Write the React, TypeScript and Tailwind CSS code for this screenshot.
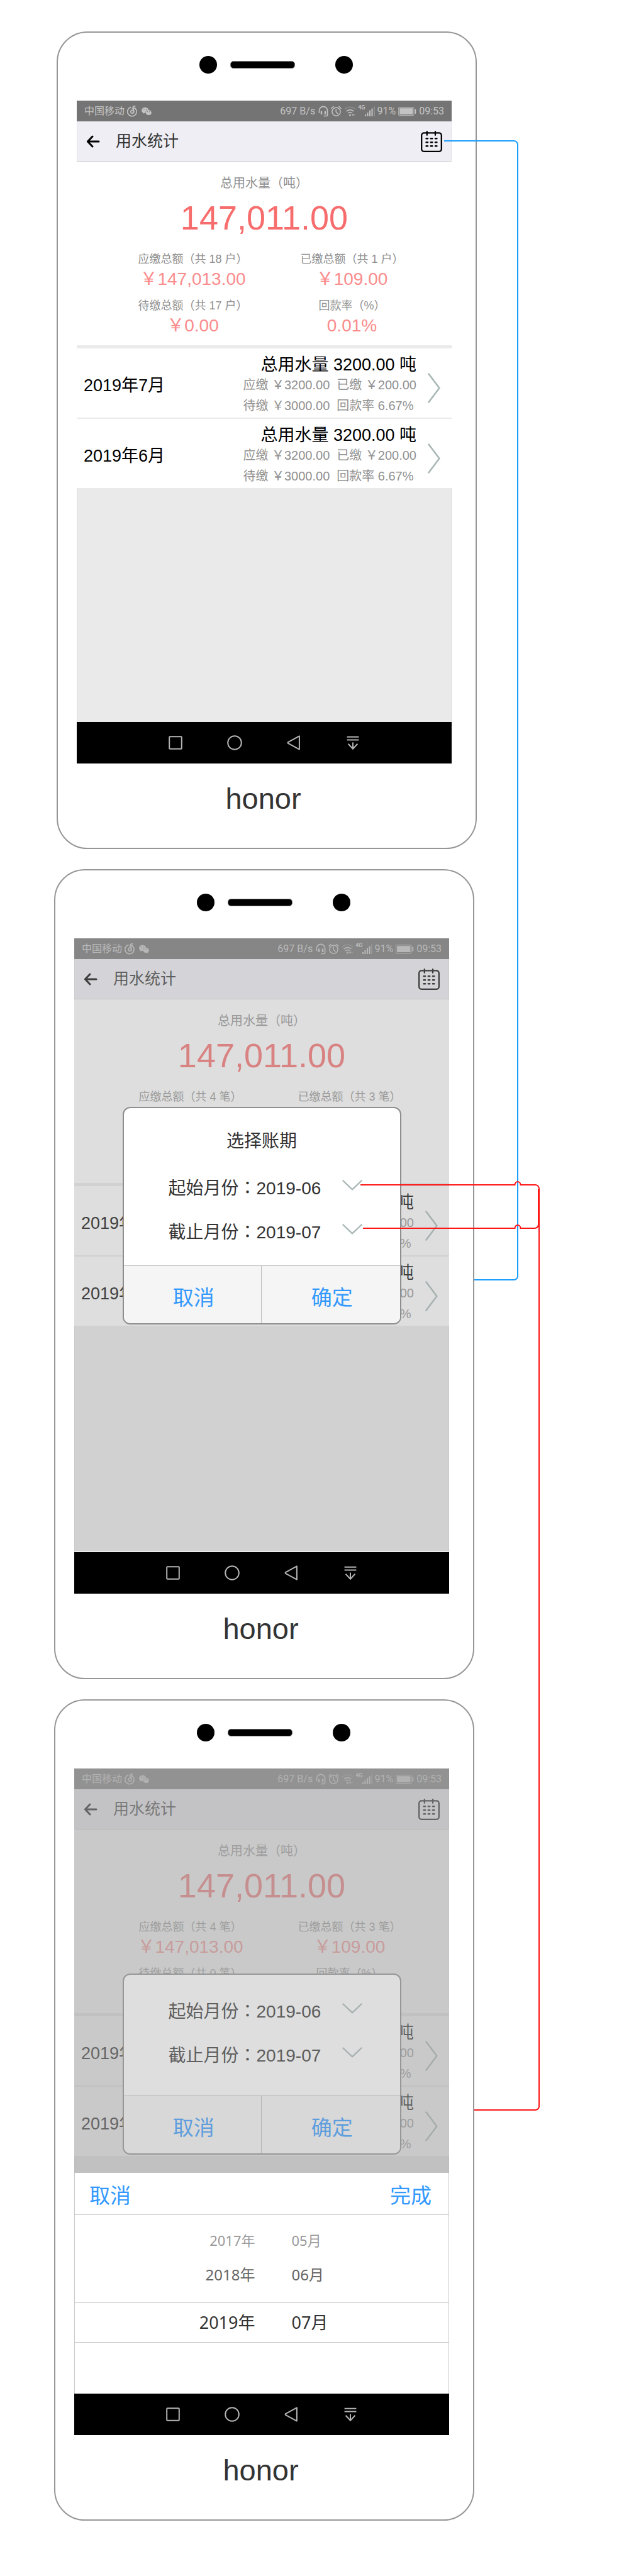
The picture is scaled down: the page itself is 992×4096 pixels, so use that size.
import type { ReactNode } from "react";
import { AiFillWechat } from "react-icons/ai";

const SANS = "font-['Liberation_Sans','Noto_Sans_CJK_SC',sans-serif]";
const ROBOTO = "font-['Roboto','Noto_Sans_CJK_SC',sans-serif]";

function MusicIcon() {
  return (
    <svg width="17" height="19" viewBox="0 0 17 19" fill="none" stroke="currentColor" strokeWidth="1.7" strokeLinecap="round">
      <path d="M5.8 3.6A7.2 7.2 0 1 0 13 5.4C11.800 4.700 10.300 4.500 8.600 5" />
      <circle cx="8.3" cy="10.6" r="2.5" />
      <path d="M10.8 10.4 9.6 4.400C9.200 2.300 10.600 1 12.600 2" />
    </svg>
  );
}

function HeadsetIcon() {
  return (
    <svg width="16" height="18" viewBox="0 0 16 18" fill="none" stroke="currentColor" strokeWidth="1.6">
      <path d="M1.4 12V8a6.6 6.6 0 0 1 13.2 0v6.5a2 2 0 0 1-2 2H8.5" />
      <path d="M5 8.5V14M11 8.5V14" strokeWidth="2.4" />
    </svg>
  );
}

function AlarmIcon() {
  return (
    <svg width="17" height="18" viewBox="0 0 17 18" fill="none" stroke="currentColor" strokeWidth="1.5">
      <circle cx="8.5" cy="9.6" r="6.6" />
      <path d="M8.2 5.4v4.6l2.6 2.6M1 4.2 4 1.4M16 4.2l-3-2.8" strokeLinecap="round" />
    </svg>
  );
}

function WifiIcon() {
  return (
    <svg width="19" height="18" viewBox="0 0 19 18" fill="none" stroke="currentColor" strokeWidth="1.7">
      <path d="M1 5.8a12 12 0 0 1 17 0" opacity="0.35" />
      <path d="M3.6 9a8.4 8.4 0 0 1 11.8 0" />
      <path d="M6.2 12a4.8 4.8 0 0 1 6.6 0" />
      <circle cx="9.5" cy="15" r="1.5" fill="currentColor" stroke="none" />
      <path d="M14.6 12.6v4l-2.4-2z" fill="currentColor" stroke="none" />
      <path d="M15.8 12.6v4l2.4-2z" fill="currentColor" stroke="none" opacity="0.4" />
    </svg>
  );
}

function SignalIcon() {
  return (
    <svg width="17" height="18" viewBox="0 0 17 18" fill="currentColor">
      <rect x="0" y="14" width="2" height="3" />
      <rect x="3.5" y="11" width="2" height="6" />
      <rect x="7" y="7.5" width="2" height="9.5" />
      <rect x="10.5" y="4.5" width="2" height="12.5" />
      <rect x="14" y="1.5" width="2" height="15.5" opacity="0.35" />
    </svg>
  );
}

function BatteryIcon() {
  return (
    <svg width="29" height="16" viewBox="0 0 29 16" fill="none">
      <rect x="0.6" y="1.6" width="24.4" height="13" rx="1.6" stroke="currentColor" strokeWidth="1.1" opacity="0.75" />
      <rect x="2.2" y="3.2" width="21.2" height="9.8" fill="currentColor" />
      <rect x="26.4" y="4.4" width="1.8" height="7.6" rx="0.9" fill="currentColor" />
    </svg>
  );
}

function CalendarIcon() {
  return (
    <svg width="34" height="34" viewBox="0 0 34 34" fill="none" stroke="currentColor" strokeWidth="2.3" strokeLinecap="round">
      <rect x="1.2" y="3.4" width="31.6" height="29.4" rx="3.8" />
      <path d="M9.8 1.200v5.600M23 1.200v5.600" />
      <path d="M8.6 12.2h2.4M15.800 12.2h2.4M23 12.2h2.4M8.6 18.2h2.4M15.800 18.2h2.4M23 18.2h2.4M8.6 24.2h2.4M15.800 24.2h2.4M23 24.2h2.4" strokeWidth="2.5" />
    </svg>
  );
}

function StatusBar() {
  return (
    <div className={`flex h-[33px] items-center bg-[#747474] pr-[12px] pl-[12px] text-[16px] leading-none text-[#c3c3c3] ${ROBOTO}`}>
      <span>中国移动</span>
      <span className="ml-[4px]"><MusicIcon /></span>
      <AiFillWechat className="ml-[5px] h-[18px] w-[18px]" />
      <span className="ml-auto">697 B/s</span>
      <span className="ml-[5px]"><HeadsetIcon /></span>
      <span className="ml-[4px]"><AlarmIcon /></span>
      <span className="ml-[4px]"><WifiIcon /></span>
      <span className="ml-[3px] self-start pt-[7px] text-[9px] leading-none font-bold">4G</span>
      <SignalIcon />
      <span className="ml-[2px]">91%</span>
      <span className="ml-[4px]"><BatteryIcon /></span>
      <span className="ml-[4px]">09:53</span>
    </div>
  );
}

function TitleBar() {
  return (
    <header className="flex h-[64px] items-center border-x border-b border-x-[#e2e2e6] border-b-[#cfcfcf] bg-[#efeef4] pr-[14px] pl-[14px]">
      <button type="button" aria-label="返回" className="text-black">
        <svg width="22" height="20" viewBox="0 0 22 20" fill="none" stroke="currentColor" strokeWidth="3" strokeLinecap="round" strokeLinejoin="round">
          <path d="M20 10H2.4M10 2 2.4 10l7.6 8" />
        </svg>
      </button>
      <h1 className="ml-[25px] text-[25px] leading-none text-[#333]">用水统计</h1>
      <button type="button" aria-label="选择账期" className="ml-auto text-black">
        <CalendarIcon />
      </button>
    </header>
  );
}

type Stat = { label: string; value: string };

function Summary({ stats }: { stats: Stat[] }) {
  return (
    <section className="bg-white pt-[20px] pb-[13px] text-center">
      <p className="text-[20px] leading-[28px] text-[#919191]">总用水量（吨）</p>
      <p className="mt-[9px] text-[54px] leading-[64px] text-[#f76d6d]">147,011.00</p>
      <dl className="mt-[20px] grid grid-cols-2 gap-y-[10px] pr-[32px] pl-[58px]">
        {stats.map((stat) => (
          <div key={stat.label}>
            <dt className="text-[18px] leading-[28px] text-[#919191]">{stat.label}</dt>
            <dd className="text-[28px] leading-[36px] text-[#fb8c8c]">{stat.value}</dd>
          </div>
        ))}
      </dl>
    </section>
  );
}

function MonthRow({ month }: { month: string }) {
  return (
    <a href="#" className="flex h-[110px] items-center bg-white pt-[8px] pr-[18px] pl-[11px] text-[27px] whitespace-nowrap text-black">
      <span>{month}</span>
      <span className="ml-auto flex flex-col text-[20px] leading-[33px] text-[#919191]">
        <span className="text-right text-[27px] leading-[32px] text-black">总用水量 3200.00 吨</span>
        <span className="flex gap-[11px]">
          <span>应缴 ￥3200.00</span>
          <span>已缴 ￥200.00</span>
        </span>
        <span className="flex gap-[11px]">
          <span>待缴 ￥3000.00</span>
          <span>回款率 6.67%</span>
        </span>
      </span>
      <svg className="mt-[8px] ml-[18px]" width="20" height="48" viewBox="0 0 20 48" fill="none" stroke="#a9b7b7" strokeWidth="2.6" strokeLinecap="round" strokeLinejoin="round">
        <path d="M1.500 1.500 18.400 24 1.500 46.500" />
      </svg>
    </a>
  );
}

function Statistics({ stats, filler }: { stats: Stat[]; filler: string }) {
  return (
    <>
      <StatusBar />
      <TitleBar />
      <Summary stats={stats} />
      <div className="flex flex-col gap-[2px] bg-[#eaeaea] pt-[5px]">
        <MonthRow month="2019年7月" />
        <MonthRow month="2019年6月" />
      </div>
      <div className={`border-x border-[#dcdcdc] bg-[#eaeaea] ${filler}`} />
    </>
  );
}

function NavBar() {
  return (
    <nav className="flex h-[66px] items-center justify-center gap-[70px] bg-black text-[#b4b4b4]">
      <button type="button" aria-label="最近任务">
        <svg width="24" height="24" viewBox="0 0 24 24" fill="none" stroke="currentColor" strokeWidth="2">
          <rect x="2.2" y="2.2" width="19.6" height="19.6" rx="1" />
        </svg>
      </button>
      <button type="button" aria-label="主屏幕">
        <svg width="24" height="24" viewBox="0 0 24 24" fill="none" stroke="currentColor" strokeWidth="2">
          <circle cx="12" cy="12" r="10.8" />
        </svg>
      </button>
      <button type="button" aria-label="后退">
        <svg width="24" height="24" viewBox="0 0 24 24" fill="none" stroke="currentColor" strokeWidth="2" strokeLinejoin="round">
          <path d="M20.9 1.4v21.2L3 12.9a1.2 1.2 0 0 1 0-1.8z" />
        </svg>
      </button>
      <button type="button" aria-label="下拉通知">
        <svg width="24" height="24" viewBox="0 0 24 24" fill="none" stroke="currentColor" strokeWidth="2">
          <path d="M2.6 2.8h18.8M2.6 7.6h18.8M12 11.4v10M4.6 13.8l7.4 8 7.4-8" />
        </svg>
      </button>
    </nav>
  );
}

function Phone({ children }: { children: ReactNode }) {
  return (
    <article className="w-[668px] rounded-[49px] border-2 border-[#969696] bg-white pr-[38px] pl-[30px]">
      <div className="flex items-center pt-[37px] pb-[43px] pl-[195px]">
        <span className="h-[28px] w-[28px] rounded-full bg-black" />
        <span className="ml-[21px] h-[12px] w-[103px] rounded-[5px] border border-[#797979] bg-black" />
        <span className="ml-[64px] h-[28px] w-[28px] rounded-full bg-black" />
      </div>
      {children}
      <NavBar />
      <p className="h-[134px] pt-[32px] pr-[3px] text-center text-[47px] leading-none text-[#333]">honor</p>
    </article>
  );
}

function MonthField({ id, label, value }: { id: string; label: string; value: string }) {
  return (
    <div className="flex h-[70px] items-center pt-[4px] pl-[71px] text-[28px] leading-[40px] text-[#333]">
      <label htmlFor={id} className="shrink-0">
        {label}
        <span className="font-['Noto_Sans_CJK_TC',sans-serif] leading-none">：</span>
      </label>
      <span className="relative w-[168px]">
        <select id={id} defaultValue={value} className="block h-[40px] w-full appearance-none bg-transparent leading-[40px]">
          <option>2019-06</option>
          <option>2019-07</option>
        </select>
        <svg className="pointer-events-none absolute top-[6px] right-0" width="32" height="17" viewBox="0 0 32 17" fill="none" stroke="#a9b7b7" strokeWidth="2.4" strokeLinecap="round" strokeLinejoin="round">
          <path d="M1.400 1.500 16 15.3 30.600 1.500" />
        </svg>
      </span>
    </div>
  );
}

function PeriodDialog({ prefix, title, body }: { prefix: string; title?: string; body: string }) {
  return (
    <div role="dialog" className="w-[443px] overflow-hidden rounded-[12px] border-2 border-[#8e8e8e] bg-white">
      {title && <h2 className="pt-[33px] pb-[18px] text-center text-[28px] leading-[40px] text-[#333]">{title}</h2>}
      <div className={body}>
        <MonthField id={`${prefix}-start`} label="起始月份" value="2019-06" />
        <MonthField id={`${prefix}-end`} label="截止月份" value="2019-07" />
      </div>
      <div className="grid h-[92px] grid-cols-2 divide-x divide-[#bdbdbd] border-t border-[#bdbdbd] bg-[#f5f5f5] text-[33px] text-[#3399ff]">
        <button type="button" className="pt-[10px] pl-[4px]">取消</button>
        <button type="button" className="pt-[10px] pl-[4px]">确定</button>
      </div>
    </div>
  );
}

function PickerSheet() {
  const cols = "grid grid-cols-2 items-center gap-x-[58px] pl-[37px] font-['Noto_Sans','Noto_Sans_CJK_SC',sans-serif]";
  return (
    <section className="h-[351px] border-x border-[#c8c8c8] bg-white">
      <div className="flex h-[67px] items-center justify-between border-b border-[#c8c8c8] pt-[8px] pr-[27px] pl-[23px] text-[33px] text-[#3399ff]">
        <button type="button">取消</button>
        <button type="button">完成</button>
      </div>
      <div className="border-b border-[#c8c8c8] pt-[10px] pb-[19px]">
        <div className={`h-[60px] text-[22px] text-[#999] ${cols}`}>
          <span className="text-right">2017年</span>
          <span>05月</span>
        </div>
        <div className={`h-[50px] text-[24px] text-[#666] ${cols}`}>
          <span className="text-right">2018年</span>
          <span>06月</span>
        </div>
      </div>
      <div className={`h-[63px] border-b border-[#c8c8c8] text-[27px] text-[#333] ${cols}`}>
        <span className="text-right">2019年</span>
        <span>07月</span>
      </div>
    </section>
  );
}

const households: Stat[] = [
  { label: "应缴总额（共 18 户）", value: "￥147,013.00" },
  { label: "已缴总额（共 1 户）", value: "￥109.00" },
  { label: "待缴总额（共 17 户）", value: "￥0.00" },
  { label: "回款率（%）", value: "0.01%" },
];

const bills: Stat[] = [
  { label: "应缴总额（共 4 笔）", value: "￥147,013.00" },
  { label: "已缴总额（共 3 笔）", value: "￥109.00" },
  { label: "待缴总额（共 0 笔）", value: "￥0.00" },
  { label: "回款率（%）", value: "0.01%" },
];

function Connectors() {
  return (
    <svg className="pointer-events-none absolute top-0 left-0" width="992" height="4096" viewBox="0 0 992 4096" fill="none" strokeWidth="2">
      <path d="M706 224H817a6 6 0 0 1 6 6V2029a6 6 0 0 1-6 6H754" stroke="#199dff" />
      <path d="M573 1884H818.500a4.500 5 0 0 1 9 0H851a6 6 0 0 1 6 6V3349a6 6 0 0 1-6 6H754" stroke="#ff1414" />
      <path d="M577 1953H818.500a4.500 5 0 0 1 9 0H850a6 6 0 0 0 6-6V1891" stroke="#ff1414" />
    </svg>
  );
}

export default function App() {
  return (
    <main className={`relative flex flex-col items-start gap-[32px] bg-white pt-[50px] pb-[88px] pl-[86px] ${SANS}`}>
      <div className="pl-[4px]">
        <Phone>
          <Statistics stats={households} filler="h-[372px]" />
        </Phone>
      </div>

      <Phone>
        <div className="relative">
          <Statistics stats={bills} filler="h-[360px]" />
          <div className="absolute inset-x-0 top-0 bottom-[2px] flex items-start justify-center bg-[rgba(166,166,166,0.374)] pt-[268px]">
            <PeriodDialog prefix="period" title="选择账期" body="pb-[19px]" />
          </div>
        </div>
      </Phone>

      <Phone>
        <div className="relative">
          <Statistics stats={bills} filler="h-[27px]" />
          <div className="absolute inset-0 flex items-start justify-center bg-[rgba(166,166,166,0.374)] pt-[326px]">
            <PeriodDialog prefix="picker" body="pt-[22px] pb-[30px]" />
          </div>
          <div className="absolute inset-0 bg-[rgba(166,166,166,0.374)]" />
        </div>
        <PickerSheet />
      </Phone>

      <Connectors />
    </main>
  );
}
